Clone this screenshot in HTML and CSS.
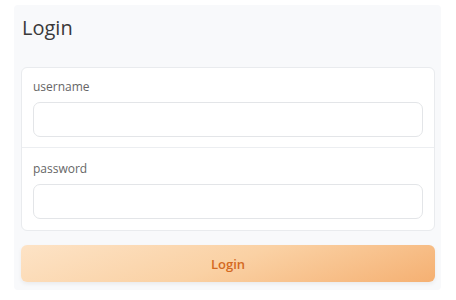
FILE: index.html
```html
<!DOCTYPE html>
<html lang="en">
<head>
    <meta charset="UTF-8">
    <meta name="viewport" content="width=device-width, initial-scale=1.0">
    <title>Login</title>
    <link rel="stylesheet" href="styles.css">
</head>
<body>

<div class="login-panel">
    <h1 class="login-title">Login</h1>

    <!-- Fields card -->
    <div class="field-card">
        <div class="field-row">
            <label for="username">username</label>
            <input type="text" id="username">
        </div>
        <div class="field-row">
            <label for="password">password</label>
            <input type="password" id="password">
        </div>
    </div>

    <button class="login-button">Login</button>
</div>

</body>
</html>
```

FILE: styles.css
```css
body {
    font-family: 'Open Sans', 'Noto Sans', sans-serif;
    background-color: #ffffff;
    margin: 0;
    color: #333;
}

.login-panel {
    margin: 5px 15px 0 14px;
    padding: 9px 6px 8px 7px;
    background-color: #f8f9fb;
    border-radius: 4px;
    display: flex;
    flex-direction: column;
}

.login-title {
    margin: 0 0 0 1px;
    font-size: 20px;
    font-weight: 400;
    line-height: 28px;
    color: #3a3a3a;
    height: 53px;
    flex-shrink: 0;
}

.field-card {
    background-color: #ffffff;
    border: 1px solid #e9ebee;
    border-radius: 6px;
    flex-shrink: 0;
}

.field-row {
    display: flex;
    flex-direction: column;
    padding: 11px 11px 10px 11px;
}

.field-row + .field-row {
    border-top: 1px solid #eceef1;
    padding-top: 13px;
    padding-bottom: 11px;
}

.field-row label {
    font-size: 12px;
    line-height: 16px;
    color: #666;
    margin-bottom: 7px;
}

.field-row input {
    height: 35px;
    box-sizing: border-box;
    border: 1px solid #e3e5e8;
    border-radius: 7px;
    background-color: #fff;
    outline: none;
    font-size: 13px;
    padding: 0 10px;
}

.login-button {
    margin-top: 14px;
    height: 37px;
    flex-shrink: 0;
    border: none;
    border-radius: 6px;
    background: linear-gradient(160deg, #fde3c6 0%, #fad1a4 50%, #f5b072 100%);
    box-shadow: 0 2px 4px rgba(0, 0, 0, 0.06);
    color: #d4691f;
    font-family: 'Open Sans', 'Noto Sans', sans-serif;
    font-size: 13px;
    font-weight: 600;
    cursor: pointer;
}
```
